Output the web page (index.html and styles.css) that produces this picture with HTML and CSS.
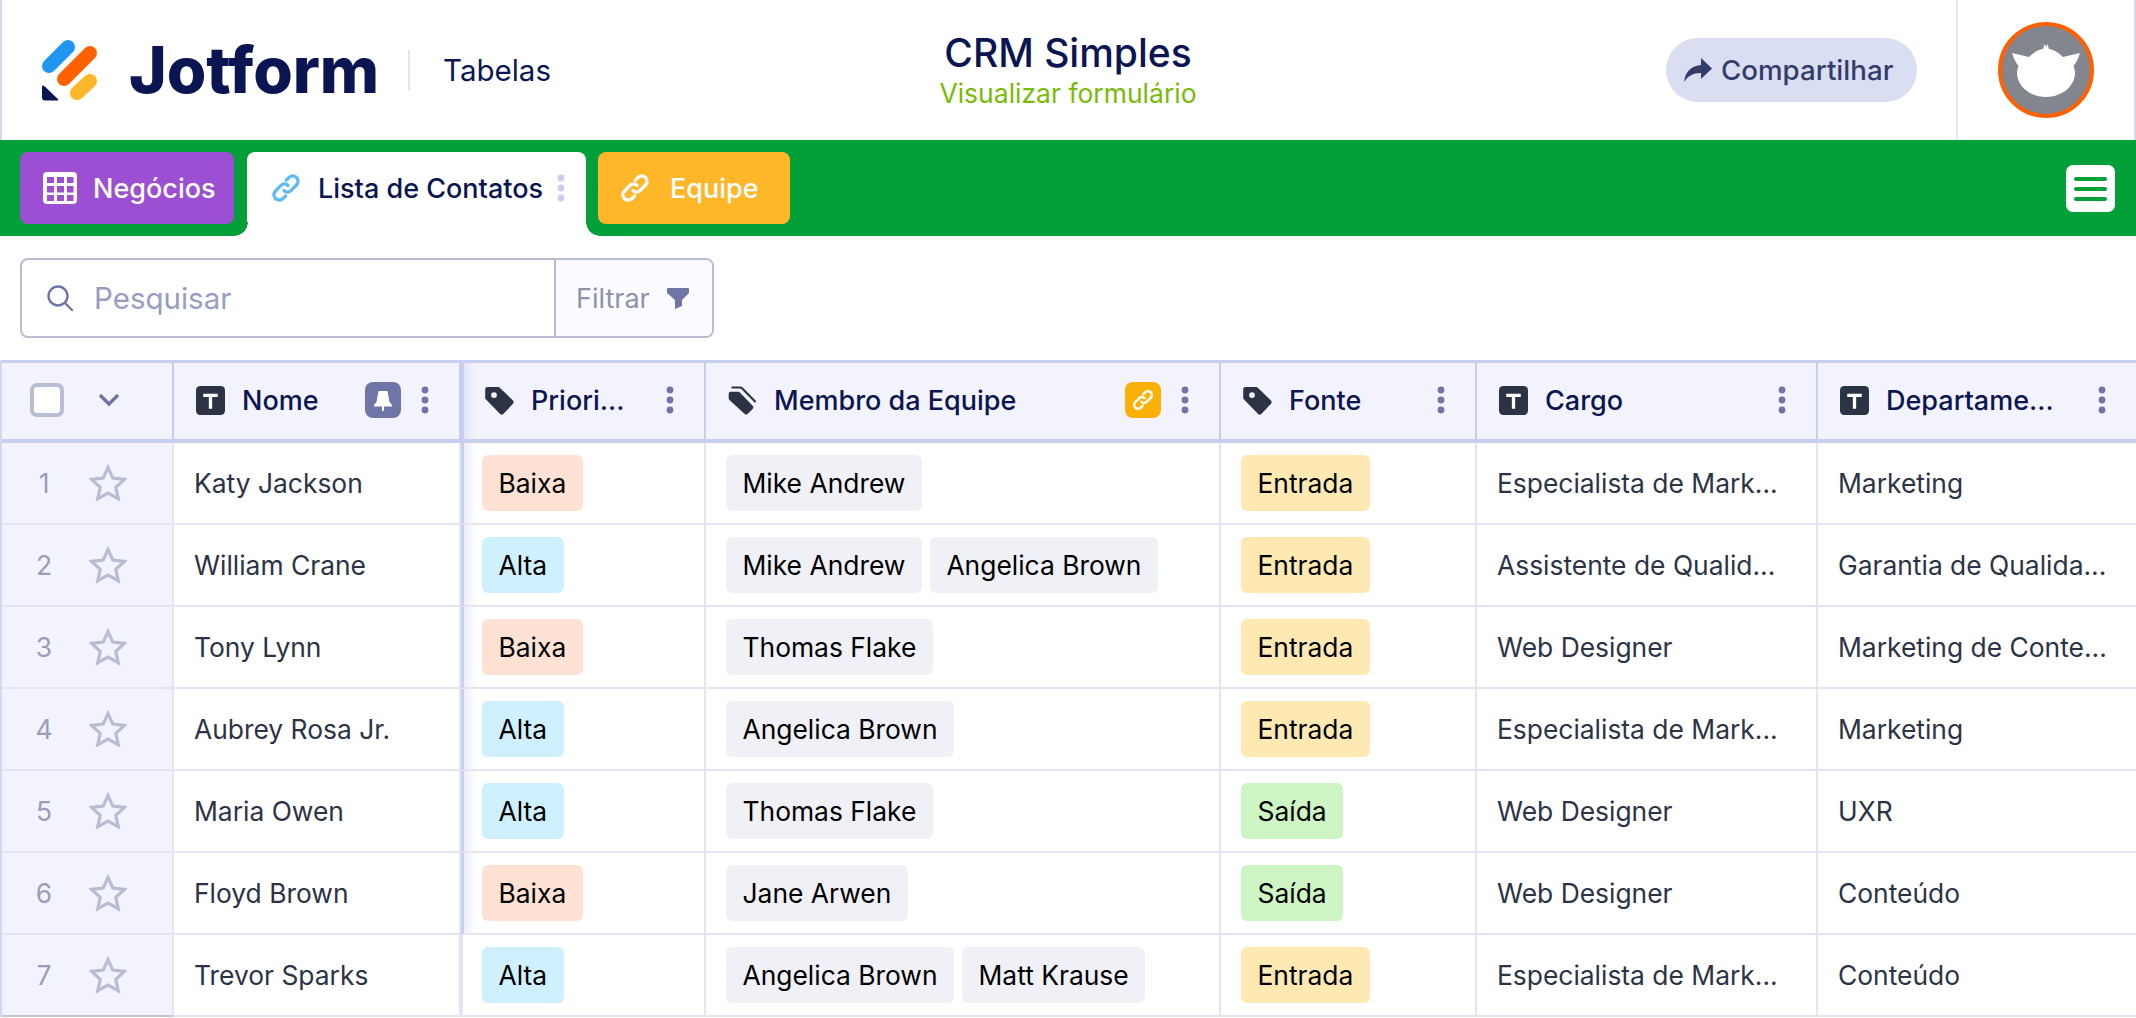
FILE: index.html
```html
<!DOCTYPE html>
<html lang="pt">
<head>
<meta charset="utf-8">
<title>CRM Simples</title>
<link rel="stylesheet" href="styles.css">
</head>
<body>
<svg class="defs" width="0" height="0" aria-hidden="true">
  <symbol id="i-t" viewBox="0 0 28 28"><rect width="28" height="28" rx="4" fill="#2c3345"/><path d="M7 7.500h14v3H15.600V22h-3.200V10.500H7z" fill="#fff"/></symbol>
  <symbol id="i-tag" viewBox="0 0 29 29"><path fill="#2c3345" fill-rule="evenodd" d="M2.500 1H13a2.500 2.500 0 0 1 1.800.8L28 14.500a2.500 2.500 0 0 1 0 3.200L18.500 27.800a2.500 2.500 0 0 1-3.600 0L1 13.500a2.500 2.500 0 0 1-.8-1.800V3.300A2.300 2.300 0 0 1 2.500 1zM9 6.200a2.900 2.900 0 1 0 0 5.800a2.900 2.900 0 0 0 0-5.800z"/></symbol>
  <symbol id="i-tags" viewBox="0 0 29 30"><path fill="#2c3345" d="M2.300 6H10a2.500 2.500 0 0 1 1.800.8L25 20.500a2.500 2.500 0 0 1 0 3.400L20 28.800a2.500 2.500 0 0 1-3.500 0L1 14.500a2.500 2.500 0 0 1-.8-1.800V8.200A2.200 2.200 0 0 1 2.300 6z"/><path fill="none" stroke="#2c3345" stroke-width="2.200" stroke-linecap="round" d="M4 1.500h8a3 3 0 0 1 2 .9L27.500 16"/></symbol>
  <symbol id="i-link" viewBox="0 0 30 30"><g fill="none" stroke="currentColor" stroke-width="3.300" stroke-linecap="round"><path d="M13 17.500a5 5 0 0 0 7 .1l5.500-5.600a5.300 5.300 0 0 0-7.500-7.500l-2.700 2.700"/><path d="M17 12.500a5 5 0 0 0-7-.1l-5.500 5.600a5.300 5.300 0 0 0 7.500 7.500l2.700-2.700"/></g></symbol>
  <symbol id="i-dots" viewBox="0 0 8 28"><g fill="currentColor"><circle cx="4" cy="4" r="3.400"/><circle cx="4" cy="14" r="3.400"/><circle cx="4" cy="24" r="3.400"/></g></symbol>
  <symbol id="i-star" viewBox="0 0 38 38"><path fill="none" stroke="#b8bdd4" stroke-width="3.200" stroke-linejoin="miter" d="M19 3.500l4.800 10.600 11.600 1.300-8.600 7.800 2.400 11.400L19 29l-10.200 5.600 2.400-11.400-8.600-7.800 11.600-1.300z"/></symbol>
</svg>

<header class="topbar">
  <div class="brand">
    <svg class="logo" viewBox="0 0 57 61" aria-hidden="true">
      <line x1="8" y1="26" x2="27" y2="7" stroke="#1f97f0" stroke-width="14" stroke-linecap="round"/>
      <line x1="23" y1="39" x2="49" y2="13" stroke="#ff6100" stroke-width="14" stroke-linecap="round"/>
      <line x1="36" y1="53" x2="49" y2="41" stroke="#ffb629" stroke-width="14" stroke-linecap="round"/>
      <path d="M1 47c0-1.500 1.300-2 2.300-1L16.800 59c1 1 .5 1.500-1 1.500H4a3 3 0 0 1-3-3z" fill="#0a1551"/>
    </svg>
    <span class="wordmark">Jotform</span>
    <span class="brand-sep"></span>
    <span class="product">Tabelas</span>
  </div>
  <div class="title-block">
    <div class="title">CRM Simples</div>
    <div class="subtitle">Visualizar formulário</div>
  </div>
  <div class="top-actions">
    <button class="share">
      <svg class="share-icon" viewBox="0 0 30 26" aria-hidden="true"><path fill="#343c6a" d="M18 1l11 10.500L18 22v-6C10 16 5 19 1 25c1-9 6-16 17-17z"/></svg>
      Compartilhar
    </button>
    <div class="account">
      <svg class="avatar" viewBox="0 0 96 96" aria-hidden="true">
        <circle cx="48" cy="48" r="46" fill="#84868f" stroke="#ff6100" stroke-width="4"/>
        <path fill="#fff" d="M14 31L31 35C36 30 41 27.500 45 27L46.500 22L48 25L49.500 22L51 27C55 27.500 60 30 65 35L82 31C80 37 78 41 75.500 44C76.500 47 77 49 77 51C77 64 64 75 48 75C32 75 19 64 19 51C19 49 19.500 47 20.500 44C18 41 16 37 14 31Z"/>
      </svg>
    </div>
  </div>
</header>

<nav class="tabbar">
  <div class="tab tab-purple">
    <svg class="grid-icon" viewBox="0 0 34 32" aria-hidden="true">
      <rect width="34" height="32" rx="4" fill="#fff"/>
      <g fill="#9c4fd3">
        <rect x="4" y="5" width="7" height="6"/><rect x="14" y="5" width="7" height="6"/><rect x="24" y="5" width="6.500" height="6"/>
        <rect x="4" y="14" width="7" height="6.500"/><rect x="14" y="14" width="7" height="6.500"/><rect x="24" y="14" width="6.500" height="6.500"/>
        <rect x="4" y="23" width="7" height="6"/><rect x="14" y="23" width="7" height="6"/><rect x="24" y="23" width="6.500" height="6"/>
      </g>
    </svg>
    <span>Negócios</span>
  </div>
  <div class="tab tab-active">
    <svg class="tab-icon link-blue" aria-hidden="true"><use href="#i-link"/></svg>
    <span>Lista de Contatos</span>
    <svg class="tab-dots" aria-hidden="true"><use href="#i-dots"/></svg>
  </div>
  <div class="tab tab-orange">
    <svg class="tab-icon link-white" aria-hidden="true"><use href="#i-link"/></svg>
    <span>Equipe</span>
  </div>
  <button class="menu-btn" aria-label="Menu"><span></span><span></span><span></span></button>
</nav>

<section class="toolbar">
  <div class="search">
    <div class="search-field">
      <svg class="search-icon" viewBox="0 0 28 28" aria-hidden="true"><circle cx="12" cy="12" r="9.500" fill="none" stroke="#6f76a7" stroke-width="2.400"/><path d="M19 19l7 7" stroke="#6f76a7" stroke-width="2.400" stroke-linecap="round"/></svg>
      <span class="placeholder">Pesquisar</span>
    </div>
    <div class="filter">
      <span>Filtrar</span>
      <svg class="funnel" viewBox="0 0 22 21" aria-hidden="true"><path fill="#6f76a7" d="M1 0H21a1 1 0 0 1 1 1V5L15 12V18L8 21V12L0 5V1a1 1 0 0 1 1-1z"/></svg>
    </div>
  </div>
</section>

<main class="table">
  <div class="row head">
    <div class="hcell c-ctl">
      <span class="checkbox"></span>
      <svg class="chev" viewBox="0 0 22 14" aria-hidden="true"><path d="M2 2l9 9 9-9" fill="none" stroke="#6f76a7" stroke-width="3.400"/></svg>
    </div>
    <div class="hcell"><svg class="hicon"><use href="#i-t"/></svg><span class="hlabel">Nome</span>
      <span class="hbtn pin"><svg viewBox="0 0 36 36" aria-hidden="true"><path fill="#fff" d="M13.500 9h9L24.500 20 27 23v1.500H19V28.500l-1 1-1-1V24.500H9V23l2.500-3z"/></svg></span>
      <svg class="dots"><use href="#i-dots"/></svg></div>
    <div class="hcell pinned"><svg class="hicon"><use href="#i-tag"/></svg><span class="hlabel">Priori...</span><svg class="dots"><use href="#i-dots"/></svg></div>
    <div class="hcell"><svg class="hicon"><use href="#i-tags"/></svg><span class="hlabel">Membro da Equipe</span>
      <span class="hbtn linked"><svg aria-hidden="true"><use href="#i-link"/></svg></span>
      <svg class="dots"><use href="#i-dots"/></svg></div>
    <div class="hcell"><svg class="hicon"><use href="#i-tag"/></svg><span class="hlabel">Fonte</span><svg class="dots"><use href="#i-dots"/></svg></div>
    <div class="hcell"><svg class="hicon"><use href="#i-t"/></svg><span class="hlabel">Cargo</span><svg class="dots"><use href="#i-dots"/></svg></div>
    <div class="hcell"><svg class="hicon"><use href="#i-t"/></svg><span class="hlabel">Departame...</span><svg class="dots"><use href="#i-dots"/></svg></div>
  </div>

  <div class="row">
    <div class="cell c-ctl"><span class="num">1</span><svg class="star"><use href="#i-star"/></svg></div>
    <div class="cell text">Katy Jackson</div>
    <div class="cell pinned"><span class="chip peach">Baixa</span></div>
    <div class="cell"><span class="chip gray">Mike Andrew</span></div>
    <div class="cell"><span class="chip yellow">Entrada</span></div>
    <div class="cell text">Especialista de Mark...</div>
    <div class="cell text">Marketing</div>
  </div>
  <div class="row">
    <div class="cell c-ctl"><span class="num">2</span><svg class="star"><use href="#i-star"/></svg></div>
    <div class="cell text">William Crane</div>
    <div class="cell pinned"><span class="chip blue">Alta</span></div>
    <div class="cell"><span class="chip gray">Mike Andrew</span><span class="chip gray">Angelica Brown</span></div>
    <div class="cell"><span class="chip yellow">Entrada</span></div>
    <div class="cell text">Assistente de Qualid...</div>
    <div class="cell text">Garantia de Qualida...</div>
  </div>
  <div class="row">
    <div class="cell c-ctl"><span class="num">3</span><svg class="star"><use href="#i-star"/></svg></div>
    <div class="cell text">Tony Lynn</div>
    <div class="cell pinned"><span class="chip peach">Baixa</span></div>
    <div class="cell"><span class="chip gray">Thomas Flake</span></div>
    <div class="cell"><span class="chip yellow">Entrada</span></div>
    <div class="cell text">Web Designer</div>
    <div class="cell text">Marketing de Conte...</div>
  </div>
  <div class="row">
    <div class="cell c-ctl"><span class="num">4</span><svg class="star"><use href="#i-star"/></svg></div>
    <div class="cell text">Aubrey Rosa Jr.</div>
    <div class="cell pinned"><span class="chip blue">Alta</span></div>
    <div class="cell"><span class="chip gray">Angelica Brown</span></div>
    <div class="cell"><span class="chip yellow">Entrada</span></div>
    <div class="cell text">Especialista de Mark...</div>
    <div class="cell text">Marketing</div>
  </div>
  <div class="row">
    <div class="cell c-ctl"><span class="num">5</span><svg class="star"><use href="#i-star"/></svg></div>
    <div class="cell text">Maria Owen</div>
    <div class="cell pinned"><span class="chip blue">Alta</span></div>
    <div class="cell"><span class="chip gray">Thomas Flake</span></div>
    <div class="cell"><span class="chip green">Saída</span></div>
    <div class="cell text">Web Designer</div>
    <div class="cell text">UXR</div>
  </div>
  <div class="row">
    <div class="cell c-ctl"><span class="num">6</span><svg class="star"><use href="#i-star"/></svg></div>
    <div class="cell text">Floyd Brown</div>
    <div class="cell pinned"><span class="chip peach">Baixa</span></div>
    <div class="cell"><span class="chip gray">Jane Arwen</span></div>
    <div class="cell"><span class="chip green">Saída</span></div>
    <div class="cell text">Web Designer</div>
    <div class="cell text">Conteúdo</div>
  </div>
  <div class="row last">
    <div class="cell c-ctl"><span class="num">7</span><svg class="star"><use href="#i-star"/></svg></div>
    <div class="cell text">Trevor Sparks</div>
    <div class="cell pinned plain"><span class="chip blue">Alta</span></div>
    <div class="cell"><span class="chip gray">Angelica Brown</span><span class="chip gray">Matt Krause</span></div>
    <div class="cell"><span class="chip yellow">Entrada</span></div>
    <div class="cell text">Especialista de Mark...</div>
    <div class="cell text">Conteúdo</div>
  </div>
</main>
</body>
</html>
```

FILE: styles.css
```css
* { box-sizing: border-box; }
html, body { margin: 0; padding: 0; height: 100%; overflow: hidden; }
body {
  background: #fff;
  color: #2c3345;
  font-family: "Inter", "Liberation Sans", sans-serif;
  font-size: 26.4px;
  width: 2136px;
  height: 1018px;
}
.defs { position: absolute; }
svg { display: block; flex: none; }
button { font: inherit; border: 0; padding: 0; }

/* Top bar */
.topbar {
  height: 140px;
  display: grid;
  grid-template-columns: 1fr auto 1fr;
  align-items: center;
  border-left: 2px solid #d3d7f0;
  border-right: 2px solid #d3d7f0;
}
.brand { display: flex; align-items: center; padding-left: 39px; }
.logo { width: 57px; height: 61px; }
.wordmark {
  margin-left: 31px;
  font-size: 64px;
  font-weight: 800;
  letter-spacing: -0.1px;
  color: #0a1551;
  line-height: 1;
}
.brand-sep { width: 2px; height: 40px; background: #e3e5f5; margin-left: 29px; }
.product { margin-left: 33px; font-size: 29.5px; color: #0a1551; }
.title-block { text-align: center; padding-bottom: 2px; }
.title { font-size: 39px; font-weight: 500; color: #0a1551; line-height: 47px; }
.subtitle { font-size: 26.5px; color: #78bb07; line-height: 34px; }
.top-actions { display: flex; justify-content: flex-end; align-items: stretch; height: 100%; }
.share {
  align-self: center;
  height: 64px;
  width: 251px;
  margin-right: 39px;
  padding-left: 17px;
  border-radius: 32px;
  background: #dadef3;
  color: #343c6a;
  font-size: 27.7px;
  font-weight: 500;
  display: flex;
  align-items: center;
  gap: 8px;
}
.share-icon { width: 30px; height: 26px; }
.account {
  width: 178px;
  border-left: 2px solid #e3e5f5;
  display: flex;
  align-items: center;
  padding-left: 40px;
}
.avatar { width: 96px; height: 96px; }

/* Tabs */
.tabbar {
  height: 96px;
  background: #03a039;
  display: flex;
  align-items: flex-start;
  padding: 12px 21px 0 20px;
  gap: 12px;
}
.tab {
  height: 72px;
  border-radius: 8px;
  display: flex;
  align-items: center;
  color: #fff;
  font-size: 27px;
  font-weight: 500;
}
.tab-purple { width: 214px; background: #9c4fd3; padding-left: 23px; gap: 16px; }
.tab-orange { width: 192px; background: #ffb629; padding-left: 22px; gap: 20px; }
.grid-icon { width: 34px; height: 32px; }
.tab-icon { width: 30px; height: 30px; }
.link-white { color: #fff; }
.link-blue { color: #5ebbf7; }
.tab-active {
  position: relative;
  width: 339px;
  height: 84px;
  background: #fff;
  color: #0a1551;
  border-radius: 8px 8px 0 0;
  padding: 0 0 12px 24px;
  gap: 17px;
  margin-left: 1px;
}
.tab-active::before,
.tab-active::after {
  content: "";
  position: absolute;
  bottom: 0;
  width: 14px;
  height: 14px;
}
.tab-active::before { left: -13px; background: radial-gradient(circle at 0 0, #03a039 13.500px, #fff 14px); }
.tab-active::after { right: -14px; background: radial-gradient(circle at 100% 0, #03a039 13.500px, #fff 14px); }
.tab-dots { width: 8px; height: 28px; color: #c8ceed; margin-left: -3px; }
.menu-btn {
  margin: 13px 0 0 auto;
  width: 49px;
  height: 47px;
  background: #fff;
  border-radius: 7px;
  display: flex;
  flex-direction: column;
  align-items: center;
  justify-content: center;
  gap: 6px;
}
.menu-btn span { width: 33px; height: 4px; border-radius: 2px; background: #03a039; }

/* Search */
.toolbar { height: 124px; padding: 22px 0 0 20px; }
.search {
  width: 694px;
  height: 80px;
  border: 2px solid #b8bdd4;
  border-radius: 8px;
  display: flex;
}
.search-field {
  flex: 1;
  display: flex;
  align-items: center;
  padding-left: 24px;
  gap: 20px;
}
.search-icon { width: 28px; height: 28px; }
.placeholder { color: #979dc0; font-size: 29.5px; }
.filter {
  width: 158px;
  border-left: 2px solid #b8bdd4;
  background: #fbfbff;
  border-radius: 0 6px 6px 0;
  display: flex;
  align-items: center;
  padding-left: 20px;
  gap: 17px;
  color: #8d92ad;
  font-size: 27px;
}
.funnel { width: 22px; height: 21px; }

/* Table */
.table { border-left: 2px solid #d3d7f0; }
.row {
  display: grid;
  grid-template-columns: 172px 287px 245px 515px 256px 341px 318px;
  height: 82px;
}
.head {
  height: 83px;
  border-top: 3px solid #c8ceed;
  border-bottom: 4px solid #c8ceed;
  background: #f3f3fe;
  color: #0a1551;
  font-weight: 500;
  font-size: 27px;
}
.hcell {
  display: flex;
  align-items: center;
  padding: 0 30px 2px 22px;
  border-right: 2px solid #c8ceed;
  min-width: 0;
}
.hcell:last-child { border-right: 0; }
.hcell.pinned {
  border-left: 3px solid #c8ceed;
  background: linear-gradient(90deg, #e3e5f3, #f3f3fe 12px);
  padding-left: 21px;
}
.hicon { width: 29px; height: 29px; margin-right: 17px; }
.hlabel { white-space: nowrap; flex: 1; }
.dots { width: 8px; height: 28px; color: #6f76a7; margin-left: 20px; }
.hbtn {
  width: 36px;
  height: 36px;
  border-radius: 8px;
  display: flex;
  align-items: center;
  justify-content: center;
}
.pin { background: #6f76a7; }
.pin svg { width: 36px; height: 36px; }
.linked { background: #fab005; color: #fff; }
.linked svg { width: 22px; height: 22px; }

.c-ctl { background: #f3f3fe; }
.hcell.c-ctl { padding-left: 28px; gap: 34px; }
.checkbox {
  width: 34px;
  height: 34px;
  background: #fff;
  border: 4px solid #b8bdd4;
  border-radius: 7px;
}
.chev { width: 22px; height: 14px; }

.cell {
  display: flex;
  align-items: center;
  gap: 8px;
  padding: 0 12px 0 20px;
  border-right: 2px solid #e3e5f5;
  border-bottom: 2px solid #e3e5f5;
  min-width: 0;
}
.cell:last-child { border-right: 0; }
.cell.pinned { background: linear-gradient(90deg, #eceef8, #fff 12px); border-left: 3px solid #c8ceed; padding-left: 18px; }
.cell.plain { background: #fff; border-left: 2px solid #e3e5f5; padding-left: 19px; }
.cell.c-ctl { padding: 0; gap: 0; }
.last .c-ctl { border-bottom-color: #c6c7cf; }
.num { width: 88px; padding-right: 4px; text-align: center; color: #9a9eb8; }
.star { width: 38px; height: 38px; margin-left: -1px; }
.text { color: #2c3345; white-space: nowrap; }
.chip {
  height: 56px;
  display: inline-flex;
  align-items: center;
  padding: 0 16.500px;
  border-radius: 6px;
  color: #000;
  white-space: nowrap;
}
.peach { background: #ffe2d3; }
.blue { background: #cff1ff; }
.gray { background: #f0f1f6; }
.yellow { background: #ffe9b3; }
.green { background: #cdf6c4; }
```
